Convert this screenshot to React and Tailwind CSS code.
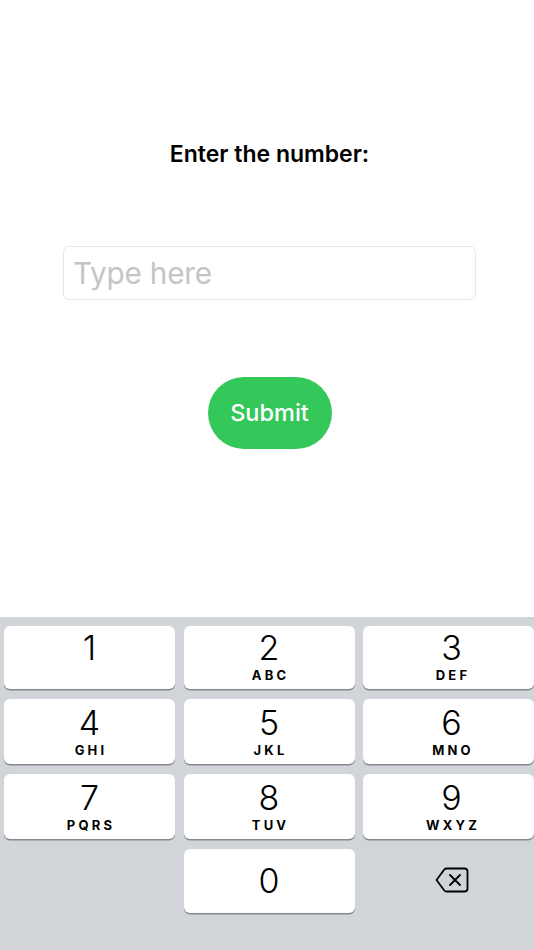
const keys = [
  ["1", "", false],
  ["2", "ABC", false],
  ["3", "DEF", true],
  ["4", "GHI", false],
  ["5", "JKL", false],
  ["6", "MNO", true],
  ["7", "PQRS", false],
  ["8", "TUV", false],
  ["9", "WXYZ", true],
]

const Key = ({ digit, letters, lastColumn }) => (
  <div className={`flex h-full flex-col items-center justify-end rounded-[6px] bg-white pb-[6px] shadow-[0_1.5px_0_#85878c] ${lastColumn ? "pl-[6px]" : ""}`}>
    <span className="h-[39px] text-[34px] leading-[39px] font-[350] text-black">{digit}</span>
    <span className="h-[16px] pl-[3px] text-[13px] leading-[16px] font-bold tracking-[3.2px] text-black">{letters}</span>
  </div>
)

const App = () => {
  return (
    <div className="flex h-[950px] w-[534px] flex-col overflow-hidden bg-white font-['Inter',sans-serif]">
      <div className="flex flex-1 flex-col items-center pl-[5px]">
        <h1 className="mt-[139px] text-[23px] leading-[30px] font-semibold text-black">Enter the number:</h1>
        <div className="mt-[77px] flex h-[54px] w-[413px] items-center rounded-[6px] border border-[#e8e8e8] px-[9px]">
          <span className="text-[29.7px] tracking-[-0.2px] text-[#c4c4c7]">Type here</span>
        </div>
        <button className="mt-[77px] h-[72px] w-[124px] rounded-[36px] bg-[#34c759] text-[23.5px] font-medium text-white">
          Submit
        </button>
      </div>
      <div className="h-[333px] bg-[#d1d4d9] pt-[9px] pl-[4px]">
        <div className="grid w-[539px] grid-cols-[171px_171px_171px] grid-rows-[63px_65px_65px_64px] gap-x-[8.5px] gap-y-[10px]">
          {keys.map((key) => (
            <Key key={key[0]} digit={key[0]} letters={key[1]} lastColumn={key[2]} />
          ))}
          <div></div>
          <div className="flex items-center justify-center rounded-[6px] bg-white pb-[2px] shadow-[0_1.5px_0_#85878c]">
            <span className="text-[34px] font-[350] text-black">0</span>
          </div>
          <div className="flex items-center justify-center pb-[2px] pl-[7px]">
            <svg width="34" height="26" viewBox="0 0 34 26" fill="none" stroke="#000" strokeWidth="1.8" strokeLinejoin="round" strokeLinecap="round">
              <path d="M11.5 1.5H29.5C31.2 1.5 32.5 2.8 32.5 4.5V21.5C32.5 23.2 31.2 24.5 29.5 24.5H11.5C10.6 24.5 9.9 24.2 9.3 23.5L1.5 13L9.3 2.5C9.9 1.8 10.6 1.5 11.5 1.5Z" />
              <path d="M15 8L25 18M25 8L15 18" />
            </svg>
          </div>
        </div>
      </div>
    </div>
  )
}

export default App
